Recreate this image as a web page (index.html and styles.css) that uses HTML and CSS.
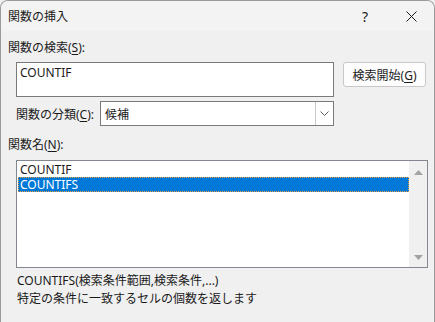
FILE: index.html
```html
<!DOCTYPE html>
<html lang="ja">

<head>
    <meta charset="UTF-8">
    <title>関数の挿入</title>
    <link rel="stylesheet" href="styles.css">
</head>

<body>
    <div class="dialog">
        <div class="titlebar">
            <span class="title">関数の挿入</span>
            <span class="caption-btn help">?</span>
            <span class="caption-btn close">
                <svg width="11" height="11" viewBox="0 0 11 11">
                    <path d="M0.5 0.5 L10.5 10.5 M10.5 0.5 L0.5 10.5" stroke="#1b1b1b" stroke-width="1" fill="none" />
                </svg>
            </span>
        </div>

        <div class="content">
            <div class="label">関数の検索(<u>S</u>):</div>

            <div class="search-row">
                <div class="textbox">COUNTIF</div>
                <button class="btn">検索開始(<u>G</u>)</button>
            </div>

            <div class="category-row">
                <span class="category-label">関数の分類(<u>C</u>):</span>
                <div class="combo">
                    <span class="combo-value">候補</span>
                    <span class="combo-arrow">
                        <svg width="9" height="5" viewBox="0 0 9 5">
                            <path d="M0.5 0.5 L4.5 4.5 L8.5 0.5" stroke="#606060" stroke-width="1" fill="none" />
                        </svg>
                    </span>
                </div>
            </div>

            <div class="label name-label">関数名(<u>N</u>):</div>

            <div class="listbox">
                <div class="items">
                    <div class="item">COUNTIF</div>
                    <div class="item selected">COUNTIFS</div>
                </div>
                <div class="scrollbar">
                    <svg width="9" height="5" viewBox="0 0 9 5">
                        <path d="M0 5 L4.5 0 L9 5 Z" fill="#a3a3a3" />
                    </svg>
                    <svg width="9" height="5" viewBox="0 0 9 5">
                        <path d="M0 0 L4.5 5 L9 0 Z" fill="#a3a3a3" />
                    </svg>
                </div>
            </div>

            <div class="description">
                <div>COUNTIFS(検索条件範囲,検索条件,...)</div>
                <div>特定の条件に一致するセルの個数を返します</div>
            </div>
        </div>
    </div>
</body>

</html>
```

FILE: styles.css
```css
html,
body {
    margin: 0;
    padding: 0;
    background: #f0f0f0;
}

body {
    font-family: "Noto Sans", "Noto Sans CJK JP", sans-serif;
    font-size: 12px;
    color: #1a1a1a;
}

u {
    text-decoration-thickness: 1px;
    text-underline-offset: 2px;
}

.dialog {
    width: 435px;
    height: 322px;
    box-sizing: border-box;
    border: 1px solid #9a9a9a;
    border-bottom: none;
    border-radius: 8px 8px 0 0;
    background: #f0f0f0;
    overflow: hidden;
}

.titlebar {
    height: 30px;
    display: flex;
    align-items: center;
    background: #f3f3f3;
}

.title {
    flex: 1;
    padding-left: 7px;
    font-size: 12px;
}

.caption-btn {
    width: 46px;
    height: 30px;
    display: flex;
    align-items: center;
    justify-content: center;
}

.help {
    font-size: 14px;
}

.content {
    padding: 9px 0 0 7px;
}

.label {
    line-height: 16px;
}

.search-row {
    display: flex;
    align-items: flex-start;
    margin-top: 6px;
    padding-left: 8px;
}

.textbox {
    width: 318px;
    height: 35px;
    box-sizing: border-box;
    border: 1px solid #7a7a7a;
    background: #fff;
    padding: 2px 3px;
    line-height: 16px;
}

.btn {
    margin-left: 9px;
    width: 83px;
    height: 25px;
    border: 1px solid #c8c8c8;
    border-radius: 3px;
    background: #fdfdfd;
    font: inherit;
    color: inherit;
    padding: 0;
}

.category-row {
    display: flex;
    align-items: center;
    margin-top: 4px;
    padding-left: 8px;
}

.category-label {
    width: 84px;
}

.combo {
    width: 234px;
    height: 25px;
    box-sizing: border-box;
    border: 1px solid #7a7a7a;
    background: #fff;
    display: flex;
    align-items: center;
}

.combo-value {
    flex: 1;
    padding-left: 4px;
}

.combo-arrow {
    width: 17px;
    height: 23px;
    border-left: 1px solid #c8c8c8;
    display: flex;
    align-items: center;
    justify-content: center;
}

.name-label {
    margin-top: 11px;
}

.listbox {
    margin: 7px 0 0 8px;
    width: 412px;
    height: 108px;
    box-sizing: border-box;
    border: 1px solid #828790;
    background: #fff;
    display: flex;
}

.items {
    flex: 1;
    padding: 1px 0 0 1px;
}

.item {
    height: 15px;
    line-height: 15px;
    padding-left: 2px;
}

.item.selected {
    background: #0078d7;
    color: #fff;
    outline: 1px dotted #e8a040;
    outline-offset: -1px;
}

.scrollbar {
    width: 18px;
    background: #f0f0f0;
    display: flex;
    flex-direction: column;
    justify-content: space-between;
    align-items: center;
    padding: 9px 0 7px;
}

.description {
    margin: 4px 0 0 9px;
    line-height: 18px;
}
```
